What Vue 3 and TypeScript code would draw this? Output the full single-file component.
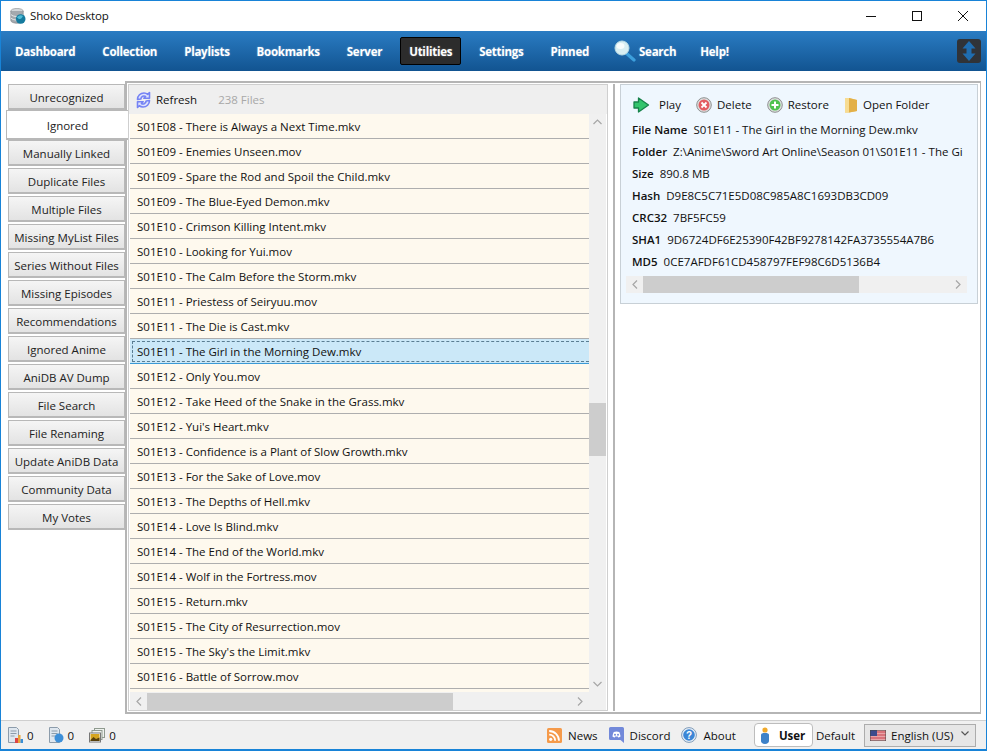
<template>
  <div class="window">
    <div class="titlebar">
      <svg class="app-icon" width="16" height="16" viewBox="0 0 16 16">
        <ellipse cx="7" cy="3" rx="6.200" ry="2.600" fill="#d3d7da" stroke="#85898d" stroke-width=".6" />
        <path d="M.8 3v9.500c0 1.500 2.800 2.700 6.200 2.700s6.200-1.200 6.200-2.700V3" fill="#a4a9ae" stroke="#777c81" stroke-width=".6" />
        <path d="M1 6.500c1 1.400 3.500 2 6 2s5-.6 6-2M1 10c1 1.400 3.500 2 6 2s5-.6 6-2" fill="none" stroke="#eceff1" stroke-width=".9" />
        <circle cx="10.700" cy="11" r="4.800" fill="#157a9e" />
        <path d="M7 9.500c1.500-2.300 4-2.800 6-1.500-.8 1.200-1.500 3-3.200 3-1.200 0-2-.6-2.800-1.500z" fill="#4fbcd6" />
      </svg>
      <span class="title">Shoko Desktop</span>
      <div class="caption">
        <svg width="12" height="12" viewBox="0 0 12 12"><path d="M1 6.500h10" stroke="#111" stroke-width="1" /></svg>
        <svg width="12" height="12" viewBox="0 0 12 12"><rect x="1.500" y="1.500" width="9" height="9" fill="none" stroke="#111" /></svg>
        <svg width="12" height="12" viewBox="0 0 12 12"><path d="M1 1l10 10M11 1L1 11" stroke="#111" stroke-width="1" /></svg>
      </div>
    </div>

    <nav class="navbar">
      <template v-for="item in navItems" :key="item">
        <svg v-if="item === 'Search'" class="search-icon" width="24" height="22" viewBox="0 0 24 22">
          <path d="M13 13l8 7" stroke="#3d9fdc" stroke-width="3.200" stroke-linecap="round" />
          <circle cx="9" cy="8" r="7" fill="#d8eef2" stroke="#b9dbe4" />
          <ellipse cx="7.500" cy="6" rx="4" ry="3" fill="#f6fcfc" />
        </svg>
        <a class="nav-item" :class="{ active: item === 'Utilities', tight: item === 'Search' }">{{ item }}</a>
      </template>
      <div class="update-btn">
        <svg width="16" height="22" viewBox="0 0 16 22"><path d="M8 1l6.500 7.500H10.500v5h4L8 21l-6.500-7.500h4v-5h-4z" fill="#1f6db0" /></svg>
      </div>
    </nav>

    <main class="content">
      <div class="tabs">
        <div v-for="tab in tabs" :key="tab" class="tab" :class="{ selected: tab === 'Ignored' }">{{ tab }}</div>
      </div>

      <div class="frame">
        <section class="list-panel">
          <div class="list-toolbar">
            <svg width="17" height="18" viewBox="0 0 17 18">
              <path d="M2.500 8.500C2.500 4.500 5.500 2 9 2c1.500 0 2.800.5 3.700 1.300L14.500 1.500v5.800H8.800l1.800-1.800c-1.700-1.100-4.300-.4-4.800 2.500zM14.500 9.500c0 4-3 6.500-6.500 6.500-1.500 0-2.800-.5-3.700-1.300L2.500 16.500v-5.800h5.700l-1.800 1.800c1.700 1.100 4.300.4 4.800-2.500z" fill="#dfe3fd" stroke="#7583f4" stroke-width="1.600" stroke-linejoin="round" />
            </svg>
            <span class="refresh">Refresh</span>
            <span class="count">238 Files</span>
          </div>
          <div class="list-body">
            <div class="rows">
              <div v-for="(file, i) in files" :key="i" class="row" :class="{ current: file === selectedFile }">
                <span>{{ file }}</span>
              </div>
            </div>
            <div class="vscroll">
              <svg class="arrow" width="9" height="6" viewBox="0 0 9 6"><path d="M.5 5l4-4 4 4" fill="none" stroke="#a6a6a6" stroke-width="1.200" /></svg>
              <div class="vtrack"><div class="vthumb"></div></div>
              <svg class="arrow" width="9" height="6" viewBox="0 0 9 6"><path d="M.5 1l4 4 4-4" fill="none" stroke="#a6a6a6" stroke-width="1.200" /></svg>
            </div>
          </div>
          <div class="list-hscroll">
            <div class="hscroll hscroll-list">
              <svg width="6" height="9" viewBox="0 0 6 9"><path d="M5 .5l-4 4 4 4" fill="none" stroke="#a6a6a6" stroke-width="1.200" /></svg>
              <div class="hthumb"></div>
              <svg width="6" height="9" viewBox="0 0 6 9"><path d="M1 .5l4 4-4 4" fill="none" stroke="#a6a6a6" stroke-width="1.200" /></svg>
            </div>
            <div class="corner"></div>
          </div>
        </section>

        <div class="splitter"></div>

        <section class="detail-side">
          <div class="detail-card">
            <div class="actions">
              <span class="action play">
                <svg width="17" height="16" viewBox="0 0 17 16"><path d="M1 5h4.500V1l10 7-10 7v-4H1z" fill="#33c46c" stroke="#17824a" stroke-width="1.300" stroke-linejoin="round" /></svg>
                Play
              </span>
              <span class="action">
                <svg width="16" height="16" viewBox="0 0 16 16"><circle cx="8" cy="8" r="7.300" fill="#dfe0e0" stroke="#8e9090" /><circle cx="8" cy="8" r="5.500" fill="#e35d62" /><path d="M5.500 5.500l5 5M10.500 5.500l-5 5" stroke="#fff" stroke-width="1.800" /></svg>
                Delete
              </span>
              <span class="action">
                <svg width="16" height="16" viewBox="0 0 16 16"><circle cx="8" cy="8" r="7.300" fill="#dfe0e0" stroke="#8e9090" /><circle cx="8" cy="8" r="5.500" fill="#4fc24f" /><path d="M8 4.500v7M4.500 8h7" stroke="#fff" stroke-width="2" /></svg>
                Restore
              </span>
              <span class="action">
                <svg width="14" height="16" viewBox="0 0 14 16"><path d="M1 1h4l8 2v11l-8 1.500H1z" fill="#f0c45c" /><path d="M5 1l8 2v11l-8 1.500z" fill="#e3b048" /><path d="M1 1h4v14.500H1z" fill="#f7dc92" /></svg>
                Open Folder
              </span>
            </div>
            <div class="details">
              <div v-for="d in details" :key="d.label" class="detail-line">
                <b>{{ d.label }}</b><span>{{ d.value }}</span>
              </div>
            </div>
            <div class="hscroll hscroll-detail">
              <svg width="6" height="9" viewBox="0 0 6 9"><path d="M5 .5l-4 4 4 4" fill="none" stroke="#a6a6a6" stroke-width="1.200" /></svg>
              <div class="hthumb"></div>
              <svg width="6" height="9" viewBox="0 0 6 9"><path d="M1 .5l4 4-4 4" fill="none" stroke="#a6a6a6" stroke-width="1.200" /></svg>
            </div>
          </div>
        </section>
      </div>
    </main>

    <footer class="statusbar">
      <div class="queue">
        <span class="queue-item">
          <svg width="15" height="16" viewBox="0 0 15 16"><path d="M.5.500h8l2 2v13H.500z" fill="#dfe7ef" stroke="#8c9cab" /><path d="M2.500 4h6M2.500 6.500h6M2.500 9h4" stroke="#8c9cab" /><rect x="7" y="11" width="3" height="5" fill="#d44" /><rect x="10" y="8" width="2.500" height="8" fill="#e8a33a" /><rect x="12.500" y="12" width="2.500" height="4" fill="#3a8fd6" /></svg>
          0
        </span>
        <span class="queue-item">
          <svg width="15" height="16" viewBox="0 0 15 16"><path d="M.5.500h8l2 2v13H.500z" fill="#dfe7ef" stroke="#8c9cab" /><path d="M2.500 4h6M2.500 6.500h6M2.500 9h4" stroke="#8c9cab" /><circle cx="10" cy="11" r="4.500" fill="#3d8fd8" /></svg>
          0
        </span>
        <span class="queue-item">
          <svg width="16" height="15" viewBox="0 0 16 15"><rect x="5.500" y=".5" width="10" height="9" fill="#eef2ee" stroke="#8f9a8f" /><rect x="3" y="2.500" width="10" height="9" fill="#eef2ee" stroke="#8f9a8f" /><rect x=".5" y="5" width="11" height="9" fill="#fff" stroke="#777" /><rect x="1.500" y="6" width="9" height="7" fill="#d5a520" /><path d="M1.500 12l3-3 2.500 2 3.500-1.500V13h-9z" fill="#57400c" /></svg>
          0
        </span>
      </div>
      <div class="links">
        <span class="link">
          <svg width="15" height="15" viewBox="0 0 15 15"><rect width="15" height="15" rx="1.500" fill="#f59a4a" /><circle cx="3.700" cy="11.300" r="1.600" fill="#fff" /><path d="M2.200 6.700a6 6 0 0 1 6 6M2.200 3a9.800 9.800 0 0 1 9.800 9.800" fill="none" stroke="#fff" stroke-width="1.800" /></svg>
          News
        </span>
        <span class="link">
          <svg width="15" height="16" viewBox="0 0 15 16"><path d="M1.500 0h12A1.500 1.500 0 0 1 15 1.500V16l-3.500-3h-10A1.500 1.500 0 0 1 0 11.500v-10A1.500 1.500 0 0 1 1.500 0z" fill="#7289da" /><path d="M3.500 9.500c.2-2 .7-3.500 1.300-4.500 1.700-.7 3.700-.7 5.400 0 .6 1 1.100 2.500 1.300 4.500-1 .8-1.700 1-2.200 1l-.6-.9H6.300l-.6.900c-.5 0-1.200-.2-2.200-1z" fill="#fff" /><circle cx="6" cy="7.800" r="1" fill="#7289da" /><circle cx="9" cy="7.800" r="1" fill="#7289da" /></svg>
          Discord
        </span>
        <span class="link">
          <svg width="16" height="16" viewBox="0 0 16 16"><circle cx="8" cy="8" r="7.400" fill="#eaf1f8" stroke="#7f9bb8" /><circle cx="8" cy="8" r="5.800" fill="#3b86d6" /><text x="8" y="11.500" text-anchor="middle" font-size="10" font-weight="700" fill="#fff" font-family="Liberation Sans, sans-serif">?</text></svg>
          About
        </span>
      </div>
      <div class="user-box">
        <svg width="10" height="17" viewBox="0 0 10 17"><circle cx="5" cy="3" r="2.600" fill="#f0a92a" /><path d="M1 8c0-1.500 1.500-2 4-2s4 .5 4 2v6c0 1.500-1.500 3-4 3s-4-1.500-4-3z" fill="#3e82c8" /></svg>
        <b>User</b>
      </div>
      <span class="default">Default</span>
      <div class="lang">
        <svg width="16" height="11" viewBox="0 0 16 11">
          <rect width="16" height="11" fill="#e9a3a8" />
          <path d="M0 2h16M0 5h16M0 8h16" stroke="#c8454f" stroke-width="1.100" />
          <rect width="7" height="6" fill="#3d4a8c" />
          <rect x=".25" y=".25" width="15.500" height="10.500" fill="none" stroke="#444" stroke-width=".5" />
        </svg>
        <span class="lang-name">English (US)</span>
        <svg class="lang-caret" width="8" height="5" viewBox="0 0 8 5"><path d="M.5.500l3.500 3.500 3.500-3.500" fill="none" stroke="#555" stroke-width="1.200" /></svg>
      </div>
    </footer>
  </div>
</template>

<script setup lang="ts">
const navItems = ['Dashboard', 'Collection', 'Playlists', 'Bookmarks', 'Server', 'Utilities', 'Settings', 'Pinned', 'Search', 'Help!']

const tabs = [
  'Unrecognized', 'Ignored', 'Manually Linked', 'Duplicate Files', 'Multiple Files',
  'Missing MyList Files', 'Series Without Files', 'Missing Episodes', 'Recommendations',
  'Ignored Anime', 'AniDB AV Dump', 'File Search', 'File Renaming', 'Update AniDB Data',
  'Community Data', 'My Votes'
]

const selectedFile = 'S01E11 - The Girl in the Morning Dew.mkv'

const files = [
  'S01E08 - There is Always a Next Time.mkv',
  'S01E09 - Enemies Unseen.mov',
  'S01E09 - Spare the Rod and Spoil the Child.mkv',
  'S01E09 - The Blue-Eyed Demon.mkv',
  'S01E10 - Crimson Killing Intent.mkv',
  'S01E10 - Looking for Yui.mov',
  'S01E10 - The Calm Before the Storm.mkv',
  'S01E11 - Priestess of Seiryuu.mov',
  'S01E11 - The Die is Cast.mkv',
  selectedFile,
  'S01E12 - Only You.mov',
  'S01E12 - Take Heed of the Snake in the Grass.mkv',
  "S01E12 - Yui's Heart.mkv",
  'S01E13 - Confidence is a Plant of Slow Growth.mkv',
  'S01E13 - For the Sake of Love.mov',
  'S01E13 - The Depths of Hell.mkv',
  'S01E14 - Love Is Blind.mkv',
  'S01E14 - The End of the World.mkv',
  'S01E14 - Wolf in the Fortress.mov',
  'S01E15 - Return.mkv',
  'S01E15 - The City of Resurrection.mov',
  "S01E15 - The Sky's the Limit.mkv",
  'S01E16 - Battle of Sorrow.mov'
]

const details = [
  { label: 'File Name', value: selectedFile },
  { label: 'Folder', value: 'Z:\\Anime\\Sword Art Online\\Season 01\\S01E11 - The Girl in the Morning Dew.mkv' },
  { label: 'Size', value: '890.8 MB' },
  { label: 'Hash', value: 'D9E8C5C71E5D08C985A8C1693DB3CD09' },
  { label: 'CRC32', value: '7BF5FC59' },
  { label: 'SHA1', value: '9D6724DF6E25390F42BF9278142FA3735554A7B6' },
  { label: 'MD5', value: '0CE7AFDF61CD458797FEF98C6D5136B4' }
]
</script>

<style>
html, body {
  margin: 0;
  background: #fff;
}
</style>

<style scoped>
.window {
  width: 987px;
  height: 751px;
  box-sizing: border-box;
  border: 1px solid #1883d7;
  border-bottom-width: 2px;
  display: flex;
  flex-direction: column;
  overflow: hidden;
  font-family: "Open Sans", "Noto Sans", sans-serif;
  font-size: 11.5px;
  color: #111;
  background: #fff;
}

.titlebar {
  height: 30px;
  flex: none;
  box-sizing: border-box;
  padding-bottom: 1px;
  display: flex;
  align-items: center;
  padding-left: 9px;
}
.app-icon { margin-right: 4px; }
.title { color: #111; letter-spacing: -.15px; }
.caption {
  margin-left: auto;
  display: flex;
  gap: 34px;
  padding-right: 17px;
}

.navbar {
  height: 40px;
  flex: none;
  display: flex;
  align-items: center;
  padding-left: 5px;
  background: linear-gradient(#2a7cc3, #125491);
}
.nav-item {
  padding: 0 8px;
  height: 28px;
  line-height: 28px;
  margin-right: 9px;
  box-sizing: border-box;
  font-size: 11.5px;
  letter-spacing: -.25px;
  font-weight: 700;
  color: #fff;
  border: 1px solid transparent;
  text-shadow: 0 0 2px rgba(255, 255, 255, .35);
}
.nav-item.active {
  background: #2c2c2c;
  border-color: #000;
  border-radius: 2px;
}
.nav-item.tight { padding-left: 1px; margin-right: 6px; }
.search-icon { margin-left: 6px; }
.update-btn {
  margin-left: auto;
  margin-right: 5px;
  width: 24px;
  height: 24px;
  border-radius: 3px;
  background: #303338;
  display: flex;
  align-items: center;
  justify-content: center;
}

.content {
  flex: 1;
  min-height: 0;
  display: flex;
  padding: 10px 5px 6px 7px;
  background: #fff;
}

.tabs {
  width: 118px;
  flex: none;
  padding-top: 3px;
  display: flex;
  flex-direction: column;
  gap: 2px;
}
.tab {
  height: 26px;
  line-height: 25px;
  box-sizing: border-box;
  border: 1px solid #b8b8b8;
  border-width: 1px 2px 2px 1px;
  background: linear-gradient(#f5f5f5, #e3e3e3);
  text-align: center;
  color: #222;
  white-space: nowrap;
}
.tab.selected {
  height: 30px;
  line-height: 29px;
  margin: -2px -2px;
  background: #fff;
  position: relative;
  z-index: 2;
  border-width: 1px 0 2px 1px;
}

.frame {
  flex: 1;
  min-width: 0;
  display: flex;
  border: 2px solid #b5b5b5;
  border-right-width: 1px;
  box-sizing: border-box;
  margin-left: -1px;
  padding: 1px 0 1px 1px;
}

.list-panel {
  width: 480px;
  flex: none;
  display: flex;
  flex-direction: column;
  box-sizing: border-box;
  border: 1px solid #cfcfcf;
  border-top: none;
}
.list-toolbar {
  height: 30px;
  flex: none;
  box-sizing: border-box;
  border-top: 1px solid #cfcfcf;
  background: #efefef;
  display: flex;
  align-items: center;
  padding-left: 6px;
}
.refresh { margin-left: 4px; }
.count { margin-left: 21px; color: #a8a8a8; }

.list-body {
  flex: 1;
  min-height: 0;
  display: flex;
  overflow: hidden;
  padding: 0 1px;
}
.rows {
  flex: 1;
  min-width: 0;
  background: #fef9ee;
  overflow: hidden;
}
.row {
  height: 25px;
  box-sizing: border-box;
  border-bottom: 1px solid #aeaeae;
  padding-left: 7px;
  line-height: 25px;
  white-space: nowrap;
}
.row.current {
  background: #cbe8f8;
  border-bottom: 1px solid #3c9ad6;
  padding: 2px 0 1px 2px;
}
.row.current span {
  display: block;
  height: 21px;
  line-height: 20px;
  padding-left: 4px;
  box-sizing: border-box;
  border: 1px dashed #5a7d92;
  border-right: none;
}

.vscroll {
  width: 17px;
  flex: none;
  background: #f0f0f0;
  display: flex;
  flex-direction: column;
  align-items: center;
}
.arrow { flex: none; margin: 5px 0; }
.vtrack {
  flex: 1;
  width: 100%;
  padding-top: 273px;
  box-sizing: border-box;
}
.vthumb {
  height: 53px;
  background: #cdcdcd;
}

.list-hscroll {
  height: 18px;
  flex: none;
  display: flex;
  padding: 0 1px;
}
.corner {
  width: 17px;
  background: #f0f0f0;
}
.hscroll {
  display: flex;
  align-items: center;
  background: #f0f0f0;
}
.hscroll-list { flex: 1; padding: 0 6px; }
.hscroll-list .hthumb {
  width: 306px;
  height: 17px;
  align-self: flex-end;
  margin: 0 auto 0 5px;
  background: #cdcdcd;
}
.hscroll-detail {
  height: 17px;
  flex: none;
  margin: 3px 10px 0 5px;
  padding: 0 6px;
}
.hscroll-detail .hthumb {
  width: 216px;
  height: 100%;
  margin: 0 auto 0 5px;
  background: #cdcdcd;
}

.splitter {
  width: 2px;
  flex: none;
  margin-left: 5px;
  background: #b5b5b5;
}

.detail-side {
  flex: 1;
  min-width: 0;
  padding-left: 5px;
  padding-right: 2px;
}
.detail-card {
  height: 220px;
  box-sizing: border-box;
  border: 1px solid #c8d0d6;
  background: #eff7fe;
  padding-top: 7px;
  display: flex;
  flex-direction: column;
}
.actions {
  display: flex;
  align-items: center;
  height: 25px;
  flex: none;
  padding-left: 12px;
  gap: 15px;
}
.action {
  display: flex;
  align-items: center;
  gap: 5px;
  white-space: nowrap;
}
.action.play { gap: 9px; }
.details {
  flex: none;
  overflow: hidden;
  margin: 2px 14px 0 11px;
}
.detail-line {
  height: 22px;
  line-height: 22px;
  white-space: nowrap;
  overflow: hidden;
  display: flex;
  gap: 6px;
}
.detail-line b { font-weight: 600; }

.statusbar {
  height: 29px;
  flex: none;
  display: flex;
  align-items: center;
  box-sizing: border-box;
  border-top: 1px solid #cfcfcf;
  background: #f0f0f0;
  padding-left: 7px;
  padding-right: 10px;
}
.queue {
  display: flex;
  gap: 15px;
}
.queue-item {
  display: flex;
  align-items: center;
  gap: 4px;
}
.links {
  margin-left: auto;
  display: flex;
  gap: 11px;
}
.link {
  display: flex;
  align-items: center;
  gap: 6px;
}
.user-box {
  margin-left: 18px;
  width: 59px;
  height: 24px;
  box-sizing: border-box;
  border: 1px solid #bdbdbd;
  border-radius: 4px;
  background: #fff;
  display: flex;
  align-items: center;
  padding-left: 5px;
  gap: 9px;
}
.user-box b { font-weight: 700; color: #111; }
.default { margin-left: 3px; }
.lang {
  margin-left: 9px;
  width: 112px;
  height: 23px;
  box-sizing: border-box;
  border: 1px solid #acacac;
  background: #e6e6e6;
  display: flex;
  align-items: center;
  padding-left: 5px;
}
.lang-name { margin-left: 5px; }
.lang-caret { margin-left: auto; margin-right: 6px; margin-top: -4px; }
</style>
